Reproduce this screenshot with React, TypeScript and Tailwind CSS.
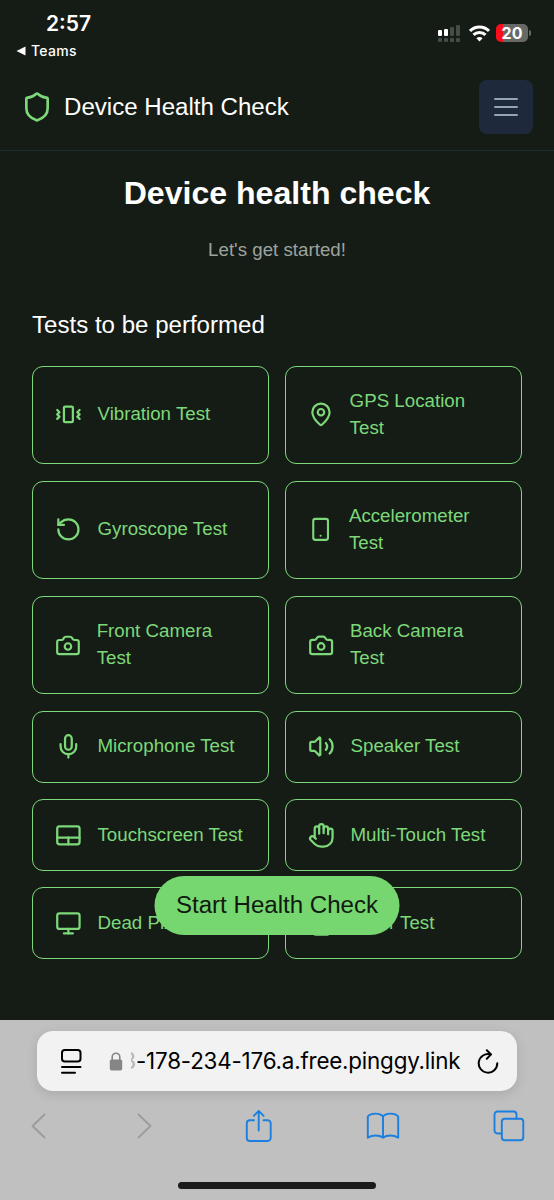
import type { ReactNode } from "react";
import {
  Camera,
  Hand,
  MapPin,
  Mic,
  Monitor,
  RotateCcw,
  Shield,
  Smartphone,
  Touchpad,
  Vibrate,
  Volume2,
  type LucideIcon,
} from "lucide-react";

interface DeviceTest {
  label: string;
  icon: LucideIcon;
}

const deviceTests: DeviceTest[] = [
  { label: "Vibration Test", icon: Vibrate },
  { label: "GPS Location Test", icon: MapPin },
  { label: "Gyroscope Test", icon: RotateCcw },
  { label: "Accelerometer Test", icon: Smartphone },
  { label: "Front Camera Test", icon: Camera },
  { label: "Back Camera Test", icon: Camera },
  { label: "Microphone Test", icon: Mic },
  { label: "Speaker Test", icon: Volume2 },
  { label: "Touchscreen Test", icon: Touchpad },
  { label: "Multi-Touch Test", icon: Hand },
  { label: "Dead Pixel Test", icon: Monitor },
  { label: "Color Test", icon: Smartphone },
];

function StatusBar() {
  return (
    <div className="flex h-16 justify-between font-['Inter',sans-serif] text-white">
      <div className="pl-4 pt-2.5">
        <div className="pl-[30px] text-[21px] leading-7 font-semibold">2:57</div>
        <div className="mt-[3px] flex items-center gap-[5px] text-[14px] leading-5 font-medium tracking-[0.3px]">
          <svg width="10" height="10" viewBox="0 0 10 10" fill="currentColor">
            <path d="M0.5 5 9.5 0.5v9z" />
          </svg>
          Teams
        </div>
      </div>

      <div className="flex items-start gap-2 pt-6 pr-[23px]">
        {/* Signal strength */}
        <svg width="23" height="18" viewBox="0 0 23 18" className="mt-px">
          <rect x="0" y="5" width="4" height="6" rx="1" fill="#fff" />
          <rect x="6" y="4" width="4" height="7" rx="1" fill="#fff" />
          <rect x="12" y="2" width="4" height="9" rx="1" fill="#454b45" />
          <rect x="18" y="0" width="4" height="11" rx="1" fill="#454b45" />
          <rect x="0" y="13" width="4" height="4" rx="1" fill="#454b45" />
          <rect x="6" y="13" width="4" height="4" rx="1" fill="#454b45" />
          <rect x="12" y="13" width="4" height="4" rx="1" fill="#454b45" />
          <rect x="18" y="13" width="4" height="4" rx="1" fill="#454b45" />
        </svg>
        {/* Wi-Fi */}
        <svg width="21" height="17" viewBox="0 0 21 17" fill="none" stroke="#fff" strokeWidth="3" className="mt-px">
          <path d="M1 5.9a13.4 13.4 0 0 1 19 0" />
          <path d="M4.5 9.9a8.5 8.5 0 0 1 12 0" />
          <path d="M10.5 16.5 7.4 13.3a4.4 4.4 0 0 1 6.2 0z" fill="#fff" stroke="none" />
        </svg>
        {/* Battery */}
        <div className="-ml-[2px] flex items-center gap-px">
          <div className="flex h-[18px] w-8 items-center justify-center rounded-[5px] bg-linear-to-r from-[#fb0d1b] from-22% to-[#666966] to-22% text-[16px] leading-none font-bold">
            20
          </div>
          <div className="h-[6px] w-[2px] rounded-r-full bg-[#666966]" />
        </div>
      </div>
    </div>
  );
}

function AppHeader() {
  return (
    <header className="flex h-[87px] items-center justify-between border-b border-[#1d2930] pr-[21px] pl-[21px]">
      <div className="flex items-center gap-[11px]">
        <Shield size={32} className="text-[#7dd87a]" />
        <span className="text-[24.08px] leading-8 text-white">Device Health Check</span>
      </div>
      <button
        aria-label="Open menu"
        className="flex size-[54px] items-center justify-center rounded-lg bg-[#1e293b]"
      >
        <span className="flex w-6 flex-col gap-[5.5px]">
          <span className="h-[2.5px] rounded-full bg-[#94a3b8]" />
          <span className="h-[2.5px] rounded-full bg-[#94a3b8]" />
          <span className="h-[2.5px] rounded-full bg-[#94a3b8]" />
        </span>
      </button>
    </header>
  );
}

function TestCard({ label, icon: Icon }: DeviceTest) {
  return (
    <div className="flex items-center gap-4 rounded-[11px] border border-[#7dd87a] px-[21.7px] py-[21.5px] text-[#7dd87a]">
      <Icon size={26.8} />
      <span className="text-[18.73px] leading-[26.8px]">{label}</span>
    </div>
  );
}

function ToolbarIcon({ width, height, children }: { width: number; height: number; children: ReactNode }) {
  return (
    <svg
      width={width}
      height={height}
      viewBox={`0 0 ${width} ${height}`}
      fill="none"
      stroke="currentColor"
      strokeWidth="1.9"
      strokeLinecap="round"
      strokeLinejoin="round"
    >
      {children}
    </svg>
  );
}

function BrowserBar() {
  return (
    <footer className="flex h-[180px] flex-col bg-[#bfc0bf] pt-[11px]">
      <div className="mx-[37px] flex h-[60px] items-center rounded-[16px] bg-[#f2f2f2] pr-[18px] pl-6 text-black shadow-[0_3px_12px_rgba(0,0,0,0.12)]">
        <svg width="21" height="25" viewBox="0 0 21 25" fill="none" stroke="currentColor" strokeWidth="2" strokeLinecap="round">
          <rect x="1" y="1" width="18.5" height="11.5" rx="2.8" />
          <path d="M1 18h18.5M1 23.7h13" />
        </svg>
        <svg width="14" height="19" viewBox="0 0 14 19" className="ml-[27px] text-[#858587]">
          <rect x="0.8" y="7.5" width="12.4" height="11" rx="1.8" fill="currentColor" />
          <path d="M3.2 8V5a3.8 3.8 0 0 1 7.6 0v3" fill="none" stroke="currentColor" strokeWidth="1.6" />
        </svg>
        {/* Only the tail of the long address fits, its first glyph is faded */}
        <div className="ml-2 flex h-8 flex-1 items-center font-['Inter',sans-serif] text-[22.4px] leading-8 tracking-[-0.2px] whitespace-nowrap">
          <span className="flex w-[5px] justify-end overflow-hidden text-[#b4b4b4]">3</span>
          <span>-178-234-176.a.free.pinggy.link</span>
        </div>
        <svg width="22" height="25" viewBox="0 0 22 25" fill="none" stroke="currentColor" strokeWidth="2" strokeLinecap="round" strokeLinejoin="round">
          <path d="M13.5 5.4A9.3 9.3 0 1 0 20.3 14.3" />
          <path d="M9.8 1.2 14 5.4 9.8 9.8" />
        </svg>
      </div>

      <div className="mt-[17px] flex h-9 items-center justify-between pr-[29px] pl-[31px] text-[#1a7fe0]">
        <span className="text-[#9b9c9b]">
          <ToolbarIcon width={15} height={26}>
            <path d="M13.5 1.5 1.5 13l12 11.5" />
          </ToolbarIcon>
        </span>
        <span className="-ml-[2px] text-[#9b9c9b]">
          <ToolbarIcon width={15} height={26}>
            <path d="m1.5 1.5 12 11.5-12 11.5" />
          </ToolbarIcon>
        </span>
        <ToolbarIcon width={28} height={34}>
          <path d="M9 11.2H4.8A3 3 0 0 0 1.8 14.2v14.8a3 3 0 0 0 3 3h17.9a3 3 0 0 0 3-3V14.2a3 3 0 0 0-3-3H18.5" />
          <path d="M13.7 21.5V2M8.8 6.8l4.9-4.9 4.9 4.9" />
        </ToolbarIcon>
        <ToolbarIcon width={34} height={28}>
          <path d="M17 4.5C14 .6 5 .6 1.8 4.5v21.2c4.500-3 11.500-3 15.200 0 3.700-3 10.700-3 15.200 0V4.500C29 .6 20 .6 17 4.500zM17 4.500v21.200" />
        </ToolbarIcon>
        <ToolbarIcon width={32} height={32}>
          <rect x="8.800" y="8.800" width="21.500" height="21.500" rx="3" />
          <path d="M8.800 23.500H4.500a3 3 0 0 1-3-3V4.500a3 3 0 0 1 3-3h16a3 3 0 0 1 3 3v4.300" />
        </ToolbarIcon>
      </div>

      {/* Home indicator */}
      <div className="mx-auto mt-auto mb-[11px] h-[7px] w-[198px] rounded-full bg-[#1b1b1b]" />
    </footer>
  );
}

export default function App() {
  return (
    <div className="flex h-[1200px] w-[554px] flex-col overflow-hidden bg-[#151c15] font-['Liberation_Sans',Arial,sans-serif]">
      <StatusBar />
      <AppHeader />

      <main className="relative flex-1 px-8 pt-[21px]">
        <h1 className="text-center text-[32.1px] leading-[43px] font-bold text-white">Device health check</h1>
        <p className="mt-[21px] text-center text-[18.73px] leading-[27px] text-[#9ca39f]">Let's get started!</p>
        <h2 className="mt-[46px] text-[24.08px] leading-8 text-white">Tests to be performed</h2>

        <div className="mt-[24.500px] grid grid-cols-2 gap-x-4 gap-y-[16.500px]">
          {deviceTests.map((test) => (
            <TestCard key={test.label} {...test} />
          ))}
        </div>

        {/* Floating action, stays above the list */}
        <button className="absolute bottom-[85px] left-1/2 h-[59px] w-[245px] -translate-x-1/2 rounded-full bg-[#76d66f] text-[24.08px] whitespace-nowrap text-[#101a10]">
          Start Health Check
        </button>
      </main>

      <BrowserBar />
    </div>
  );
}
